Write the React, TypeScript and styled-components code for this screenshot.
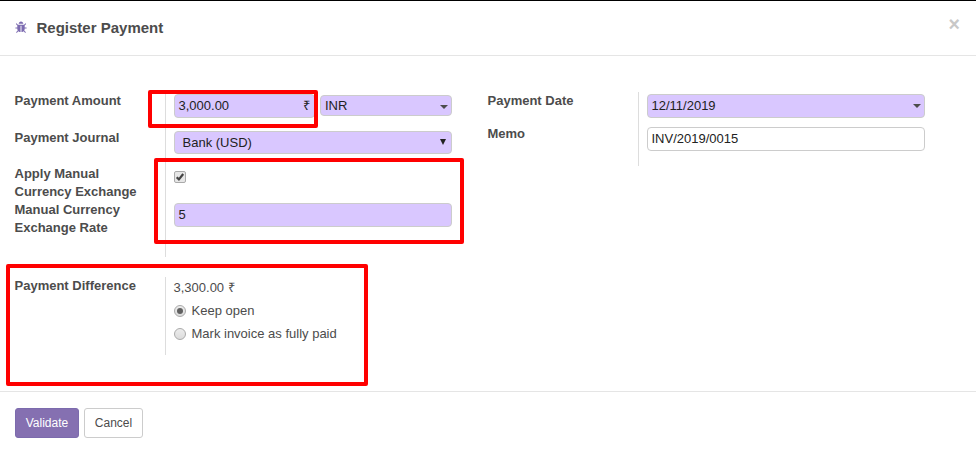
import React from "react";
import styled, { createGlobalStyle } from "styled-components";

const GlobalStyle = createGlobalStyle`
  * { box-sizing: border-box; }
  body {
    margin: 0;
    background: #fff;
    color: #4c4c4c;
    font: 13px/18px "Liberation Sans", Arial, sans-serif;
  }
`;

const Dialog = styled.div`
  position: relative;
  display: flex;
  flex-direction: column;
  width: 976px;
  height: 452px;
  border-top: 1px solid #000;
  overflow: hidden;
`;

const Header = styled.header`
  display: flex;
  align-items: center;
  flex: 0 0 55px;
  padding: 0 16px 0 14.5px;
  border-bottom: 1px solid #e5e5e5;
`;

const BugIcon = styled.svg`
  width: 12px;
  height: 13px;
  margin-right: 10px;
  margin-top: -2px;
  fill: #7c6bb0;
`;

const Title = styled.h4`
  flex: 1;
  margin: 0;
  font-size: 15px;
  line-height: 20px;
`;

const CloseButton = styled.button`
  padding: 0;
  margin: -8px 0 0;
  border: 0;
  background: none;
  color: #c8c8c8;
  font: bold 19.5px/20px "Liberation Sans", Arial, sans-serif;
`;

const Body = styled.main`
  flex: 0 0 335px;
  padding: 36px 0 0 14.5px;
`;

const Columns = styled.div`
  display: grid;
  grid-template-columns: 473px 473px;
  align-items: start;
`;

const Group = styled.section<{ $height: number; $top?: number }>`
  display: grid;
  grid-template-columns: 150.5px 287px;
  height: ${(p) => p.$height}px;
  margin-top: ${(p) => p.$top ?? 0}px;
`;

const Labels = styled.div`
  display: flex;
  flex-direction: column;
`;

const Label = styled.label<{ $height: number }>`
  height: ${(p) => p.$height}px;
  font-weight: bold;
`;

const Fields = styled.div`
  display: flex;
  flex-direction: column;
  border-left: 1px solid #ddd;
  padding: 2px 0 0 8px;
`;

const FieldRow = styled.div<{ $height: number }>`
  display: flex;
  align-items: flex-start;
  gap: 5px;
  flex: 0 0 ${(p) => p.$height}px;
`;

const Field = styled.div<{
  $width?: number;
  $height?: number;
  $plain?: boolean;
  $inset?: number;
  $top?: number;
}>`
  display: flex;
  align-items: center;
  justify-content: space-between;
  width: ${(p) => p.$width ?? 278}px;
  height: ${(p) => p.$height ?? 24}px;
  margin-top: ${(p) => p.$top ?? 0}px;
  padding: 0 3px 0 ${(p) => p.$inset ?? 3.5}px;
  border: 1px solid #ccc;
  border-radius: 4px;
  background: ${(p) => (p.$plain ? "#fff" : "#d9c7ff")};
  color: #222;
`;

const Value = styled.span<{ $up?: number }>`
  margin-top: ${(p) => -(p.$up ?? 1)}px;
`;

const Rupee = styled.span`
  margin: -1px 1.5px 0 0;
`;

const Caret = styled.i<{ $shift?: number }>`
  border: 4px solid transparent;
  border-top-color: #4c4c4c;
  border-bottom: 0;
  margin-top: ${(p) => p.$shift ?? 0}px;
`;

const SelectArrow = styled.svg`
  width: 6px;
  height: 6px;
  margin: -2px 2px 0 0;
  fill: #222;
`;

const Checkbox = styled.svg`
  width: 12px;
  height: 12px;
  margin-top: 1px;
`;

const Choice = styled.div`
  display: flex;
  align-items: center;
  height: 23px;
`;

const Radio = styled.span<{ $checked?: boolean }>`
  display: grid;
  place-items: center;
  width: 12px;
  height: 12px;
  margin-right: 5.5px;
  border: 1px solid #aaa;
  border-radius: 50%;
  background: linear-gradient(#ececec, #dcdcdc);
  &::after {
    content: "";
    width: 6px;
    height: 6px;
    border-radius: 50%;
    background: ${(p) => (p.$checked ? "#606060" : "transparent")};
  }
`;

const Amount = styled.div`
  height: 20px;
  margin-left: -0.5px;
`;

const Footer = styled.footer`
  display: flex;
  flex: 1;
  gap: 5px;
  align-items: flex-start;
  padding: 16px 15px;
  border-top: 1px solid #e5e5e5;
`;

const Button = styled.button<{ $primary?: boolean; $width: number }>`
  width: ${(p) => p.$width}px;
  height: 30px;
  padding: 0;
  border: 1px solid ${(p) => (p.$primary ? "#7c6bad" : "#ccc")};
  border-radius: 3px;
  background: ${(p) => (p.$primary ? "#8570b1" : "#fff")};
  color: ${(p) => (p.$primary ? "#fff" : "#4c4c4c")};
  font: 12px/18px "Liberation Sans", Arial, sans-serif;
`;

const Highlight = styled.div<{ $x: number; $y: number; $w: number; $h: number }>`
  position: absolute;
  left: ${(p) => p.$x}px;
  top: ${(p) => p.$y - 1}px;
  width: ${(p) => p.$w}px;
  height: ${(p) => p.$h}px;
  border: 4px solid #f00;
  border-radius: 2px;
  pointer-events: none;
`;

export default function App() {
  return (
    <>
      <GlobalStyle />
      <Dialog>
        <Header>
          <BugIcon viewBox="0 0 1664 1792">
            <path d="M1632 960q0 26-19 45t-45 19h-224q0 171-67 290l208 209q19 19 19 45t-19 45q-18 19-45 19t-45-19l-198-197q-5 5-15 13t-42 28.5-65 36.5-82 29-97 13v-896h-128v896q-51 0-101.5-13.5t-87-33-66-39-43.5-32.5l-15-14-183 207q-20 21-48 21-24 0-43-16-19-18-20.5-44.5t15.5-46.5l202-227q-58-114-58-274h-224q-26 0-45-19t-19-45 19-45 45-19h224v-294l-173-173q-19-19-19-45t19-45 45-19 45 19l173 173h844l173-173q19-19 45-19t45 19 19 45-19 45l-173 173v294h224q26 0 45 19t19 45zm-480-576h-640q0-133 93.5-226.5t226.5-93.5 226.5 93.5 93.5 226.5z" />
          </BugIcon>
          <Title>Register Payment</Title>
          <CloseButton aria-label="Close">×</CloseButton>
        </Header>

        <Body>
          <Columns>
            <Group $height={165}>
              <Labels>
                <Label $height={37}>Payment Amount</Label>
                <Label $height={36}>Payment Journal</Label>
                <Label $height={36}>Apply Manual<br />Currency Exchange</Label>
                <Label $height={36}>Manual Currency<br />Exchange Rate</Label>
              </Labels>
              <Fields>
                <FieldRow $height={37}>
                  <Field $width={141}>
                    <Value>3,000.00</Value>
                    <Rupee>₹</Rupee>
                  </Field>
                  <Field $width={132} $height={21} $top={1} $inset={4}>
                    <Value $up={0}>INR</Value>
                    <Caret $shift={3} />
                  </Field>
                </FieldRow>
                <FieldRow $height={39}>
                  <Field $height={23} $inset={7.5}>
                    <Value $up={0}>Bank (USD)</Value>
                    <SelectArrow viewBox="0 0 6 6"><path d="M0 0H6L3 6Z" /></SelectArrow>
                  </Field>
                </FieldRow>
                <FieldRow $height={33}>
                  <Checkbox viewBox="0 0 12 12">
                    <rect x=".5" y=".5" width="11" height="11" rx="1.5" fill="#e6e6e6" stroke="#aaa" />
                    <path d="M2.7 6.2L4.9 8.4L9.2 3" fill="none" stroke="#444" strokeWidth="2.2" />
                  </Checkbox>
                </FieldRow>
                <FieldRow $height={24}>
                  <Field><Value>5</Value></Field>
                </FieldRow>
              </Fields>
            </Group>

            <Group $height={74}>
              <Labels>
                <Label $height={33}>Payment Date</Label>
                <Label $height={33}>Memo</Label>
              </Labels>
              <Fields>
                <FieldRow $height={33}>
                  <Field><Value>12/11/2019</Value><Caret /></Field>
                </FieldRow>
                <FieldRow $height={33}>
                  <Field $plain><Value>INV/2019/0015</Value></Field>
                </FieldRow>
              </Fields>
            </Group>
          </Columns>

          <Group $height={78} $top={20}>
            <Labels><Label $height={20}>Payment Difference</Label></Labels>
            <Fields>
              <Amount>3,300.00 ₹</Amount>
              <Choice><Radio $checked />Keep open</Choice>
              <Choice><Radio />Mark invoice as fully paid</Choice>
            </Fields>
          </Group>
        </Body>

        <Footer>
          <Button $primary $width={64}>Validate</Button>
          <Button $width={59}>Cancel</Button>
        </Footer>

        <Highlight $x={148} $y={90} $w={170} $h={38} />
        <Highlight $x={154} $y={158} $w={310} $h={86} />
        <Highlight $x={6} $y={264} $w={362} $h={122} />
      </Dialog>
    </>
  );
}
